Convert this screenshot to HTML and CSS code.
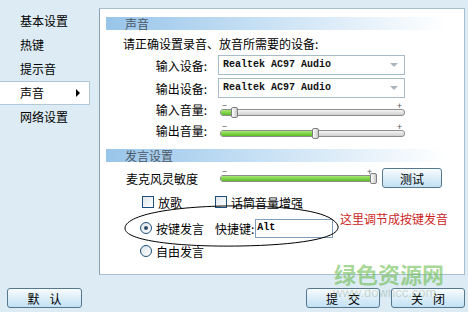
FILE: index.html
```html
<!doctype html>
<html lang="zh-CN">
<head>
    <meta charset="UTF-8">
    <title>声音设置</title>
    <link rel="stylesheet" href="styles.css">
</head>
<body>
<div class="main">
    <ul class="nav">
        <li>基本设置</li>
        <li>热键</li>
        <li>提示音</li>
        <li class="active">声音<span class="arrow"></span></li>
        <li>网络设置</li>
    </ul>

    <div class="panel">
        <div class="section-title">声音</div>
        <p class="hint">请正确设置录音、放音所需要的设备:</p>

        <div class="form-row">
            <span class="label">输入设备:</span>
            <div class="select">Realtek AC97 Audio<span class="caret"></span></div>
        </div>
        <div class="form-row">
            <span class="label">输出设备:</span>
            <div class="select">Realtek AC97 Audio<span class="caret"></span></div>
        </div>
        <div class="form-row slider-row">
            <span class="label">输入音量:</span>
            <div class="slider">
                <div class="marks"><span>−</span><span>+</span></div>
                <div class="track"><div class="fill" style="width: 12px"></div><div class="thumb" style="left: 10px"></div></div>
            </div>
        </div>
        <div class="form-row slider-row">
            <span class="label">输出音量:</span>
            <div class="slider">
                <div class="marks"><span>−</span><span>+</span></div>
                <div class="track"><div class="fill" style="width: 93px"></div><div class="thumb" style="left: 91px"></div></div>
            </div>
        </div>

        <div class="section-title second">发言设置</div>

        <div class="mic-row">
            <span class="mic-label">麦克风灵敏度</span>
            <div class="slider mic">
                <div class="marks"><span>−</span><span>+</span></div>
                <div class="track"><div class="fill" style="width: 153px"></div><div class="thumb" style="left: 149px"></div></div>
            </div>
            <button class="btn test">测试</button>
        </div>

        <div class="check-row">
            <label class="check"><span class="box"></span>放歌</label>
            <label class="check second"><span class="box"></span>话筒音量增强</label>
        </div>

        <div class="radio-row">
            <span class="radio checked"></span>按键发言
            <span class="hotkey-label">快捷键:</span>
            <div class="hotkey">Alt</div>
        </div>
        <div class="radio-row free">
            <span class="radio"></span>自由发言
        </div>
    </div>
</div>

<div class="footer">
    <button class="btn">默认</button>
    <div class="spacer"></div>
    <button class="btn">提交</button>
    <button class="btn">关闭</button>
</div>

<!-- annotation drawn over the screenshot -->
<svg class="note-ring" width="468" height="312" viewBox="0 0 468 312">
    <path d="M125 228 C126 213 185 205 245 206 C300 207 333 213 338 226 C341 238 300 245 240 246 C180 247 124 241 125 228 Z"
          fill="none" stroke="#000" stroke-width="1"/>
</svg>
<div class="note">这里调节成按键发音</div>

<div class="watermark">绿色资源网</div>
<div class="watermark-url">www.downcc.com</div>
</body>
</html>
```

FILE: styles.css
```css
body {
    margin: 0;
    width: 468px;
    height: 312px;
    overflow: hidden;
    position: relative;
    background: #dcebf4;
    font-family: "Noto Sans CJK SC", sans-serif;
    font-size: 12px;
    color: #000;
}

.main {
    display: flex;
    height: 275px;
}

.nav {
    list-style: none;
    margin: 0;
    padding: 9px 0 0;
    width: 99px;
}

.nav li {
    position: relative;
    height: 24px;
    line-height: 24px;
    padding-left: 20px;
    box-sizing: border-box;
}

.nav li.active {
    width: 90px;
    background: #fff;
    border: 1px solid #b3c8d6;
    border-left: none;
    line-height: 22px;
}

.arrow {
    position: absolute;
    right: 9px;
    top: 7px;
    border-left: 4px solid #000;
    border-top: 4px solid transparent;
    border-bottom: 4px solid transparent;
}

.panel {
    width: 366px;
    height: 267px;
    margin-top: 8px;
    box-sizing: border-box;
    border: 1px solid #a9bfce;
    border-left-color: #8aa2b4;
    background: #fff;
    padding: 8px 0 0 6px;
}

.section-title {
    width: 341px;
    height: 13px;
    line-height: 13px;
    padding-left: 19px;
    box-sizing: border-box;
    color: #4b5866;
    background: linear-gradient(to right, #98c5ea, #c7e0f4 45%, #fff);
}

.section-title.second {
    margin-top: 9px;
}

.hint {
    margin: 6px 0 0 17px;
    line-height: 16px;
}

.form-row {
    display: flex;
    align-items: center;
    height: 20px;
    margin-top: 3px;
}

.form-row:first-of-type {
    margin-top: 5px;
}

.label {
    width: 101px;
    text-align: right;
}

.select {
    position: relative;
    width: 187px;
    height: 20px;
    margin-left: 11px;
    box-sizing: border-box;
    border: 1px solid #a7bbc8;
    padding-left: 4px;
    font-family: "Liberation Mono", monospace;
    font-size: 10px;
    font-weight: bold;
    line-height: 18px;
    color: #111;
}

.caret {
    position: absolute;
    right: 6px;
    top: 7px;
    border-top: 4px solid #a9b6bf;
    border-left: 4px solid transparent;
    border-right: 4px solid transparent;
}

.slider-row {
    height: 20px;
    margin-top: 1px;
}

.slider {
    width: 185px;
    margin-left: 13px;
}

.marks {
    display: flex;
    justify-content: space-between;
    height: 6px;
    padding: 0 3px 0 2px;
    font-size: 9px;
    line-height: 5px;
    color: #555;
}

.track {
    position: relative;
    height: 7px;
    box-sizing: border-box;
    border: 1px solid #8d8d8d;
    border-radius: 3px;
    background: linear-gradient(#f5f5f5, #cfcfcf);
}

.fill {
    height: 100%;
    border-radius: 2px;
    background: linear-gradient(#a9e874, #5cbf25);
}

.thumb {
    position: absolute;
    top: -3px;
    width: 5px;
    height: 9px;
    border: 1px solid #7f7f7f;
    border-radius: 2px;
    background: linear-gradient(to right, #fff, #c9c9c9);
}

.mic-row {
    display: flex;
    align-items: center;
    height: 20px;
    margin-top: 6px;
    padding-left: 20px;
}

.mic-label {
    width: 94px;
}

.slider.mic {
    width: 155px;
    margin-left: 0;
    margin-top: -5px;
}

.btn {
    height: 20px;
    padding: 0;
    border: 1px solid #56788f;
    border-radius: 3px;
    background: linear-gradient(#f8fcff, #dcedf8 50%, #c2e1f5);
    font-family: "Noto Sans CJK SC", sans-serif;
    font-size: 12px;
    letter-spacing: 10px;
    text-indent: 10px;
    color: #000;
}

.btn.test {
    width: 60px;
    margin-left: 7px;
    letter-spacing: 0;
    text-indent: 0;
}

.check-row {
    display: flex;
    align-items: center;
    height: 16px;
    margin-top: 6px;
    padding-left: 36px;
}

.check {
    display: flex;
    align-items: center;
    gap: 4px;
}

.check.second {
    margin-left: 33px;
}

.box {
    width: 12px;
    height: 12px;
    box-sizing: border-box;
    border: 1px solid #1d4f7a;
    background: linear-gradient(135deg, #dfe6ec, #fff);
}

.radio-row {
    display: flex;
    align-items: center;
    height: 20px;
    margin-top: 8px;
    padding-left: 34px;
}

.radio-row.free {
    height: 14px;
    margin-top: 6px;
}

.radio {
    position: relative;
    width: 12px;
    height: 12px;
    margin-right: 4px;
    box-sizing: border-box;
    border: 1px solid #1d4f7a;
    border-radius: 50%;
    background: linear-gradient(135deg, #dce4ea, #fff);
}

.radio.checked::after {
    content: "";
    position: absolute;
    left: 3px;
    top: 3px;
    width: 4px;
    height: 4px;
    border-radius: 50%;
    background: #2f4f6a;
}

.hotkey-label {
    margin-left: 11px;
}

.hotkey {
    width: 78px;
    height: 19px;
    margin-left: 1px;
    box-sizing: border-box;
    border: 1px solid #7f9db9;
    padding-left: 1px;
    font-family: "Liberation Mono", monospace;
    font-size: 10px;
    font-weight: bold;
    line-height: 15px;
}

.footer {
    display: flex;
    gap: 11px;
    margin-top: 13px;
    padding: 0 3px 0 7px;
}

.footer .btn {
    width: 74px;
}

.footer .btn:first-child {
    width: 75px;
}

.spacer {
    flex: 1;
}

.note-ring {
    position: absolute;
    left: 0;
    top: 0;
    pointer-events: none;
}

.note {
    position: absolute;
    left: 340px;
    top: 211px;
    line-height: 16px;
    color: #cc1f1f;
}

.watermark {
    position: absolute;
    left: 334px;
    top: 259px;
    font-size: 22px;
    font-weight: bold;
    line-height: 28px;
    color: rgba(92, 182, 60, 0.55);
}

.watermark-url {
    position: absolute;
    left: 333px;
    top: 285px;
    font-family: "Liberation Sans", sans-serif;
    font-size: 13px;
    line-height: 16px;
    color: rgba(120, 150, 120, 0.35);
}
```
